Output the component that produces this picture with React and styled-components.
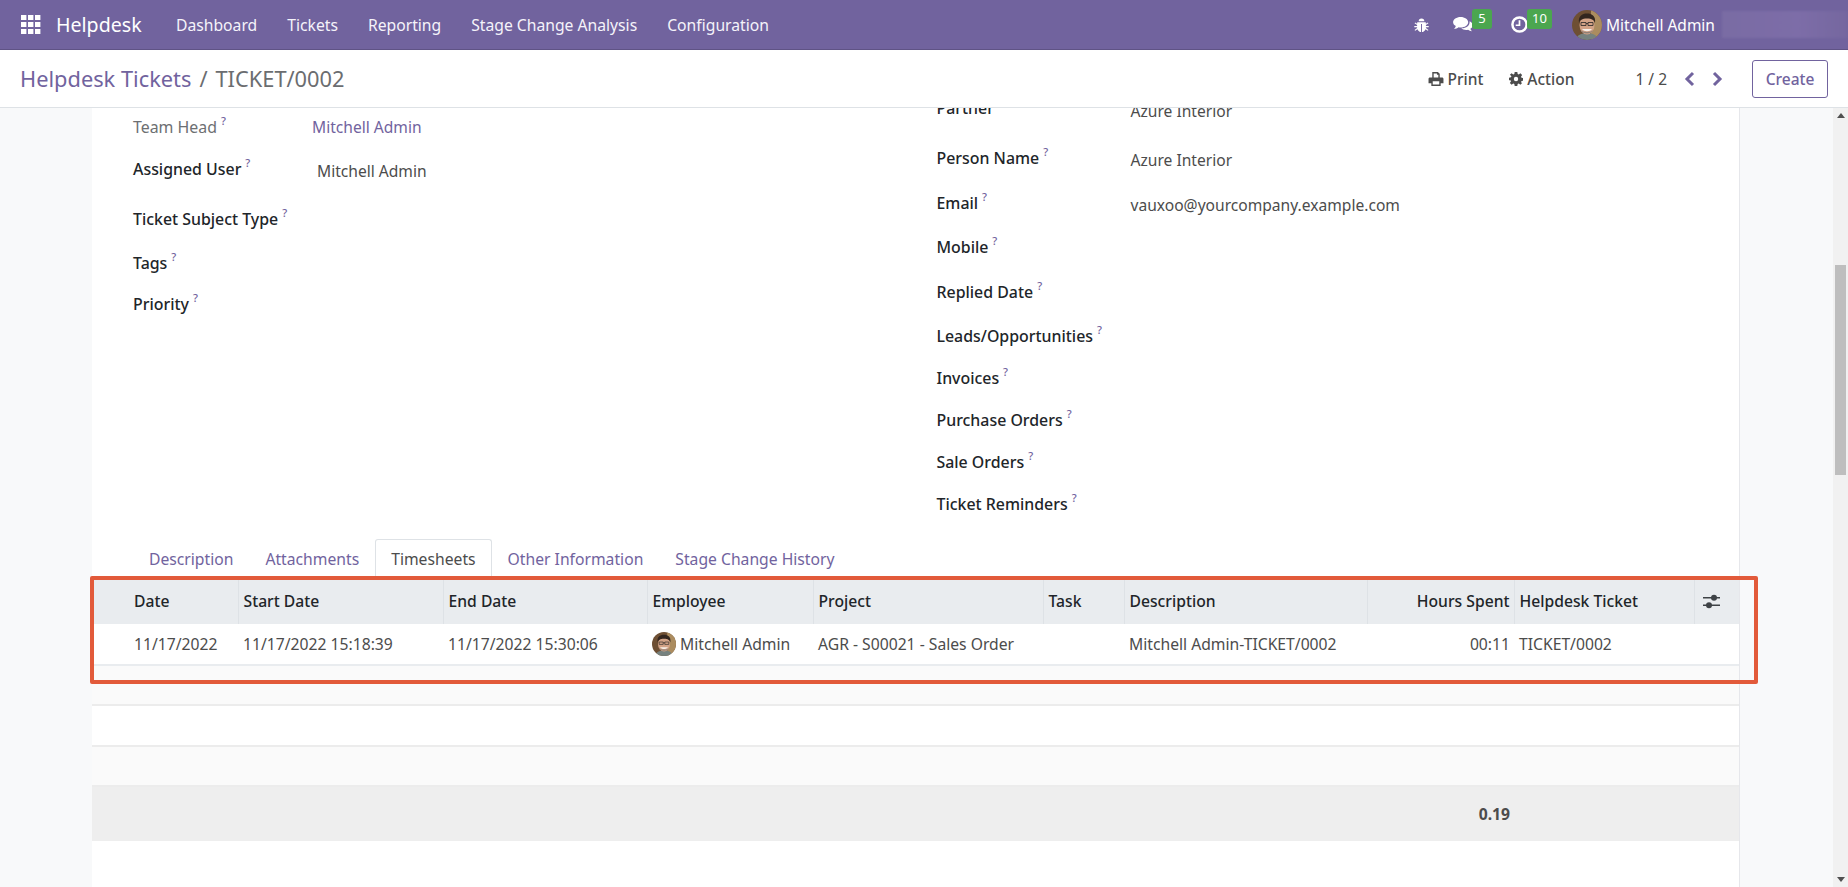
import React from "react";
import styled, { createGlobalStyle } from "styled-components";

const Global = createGlobalStyle`
  html, body { margin: 0; padding: 0; height: 100%; overflow: hidden; }
  body { font-family: "Noto Sans", "Liberation Sans", sans-serif; font-size: 15.7px; color: #4c4c4c; background: #fff; }
  * { box-sizing: border-box; }
`;

const Page = styled.div`display: flex; flex-direction: column; height: 887px; width: 1848px;`;
const Nav = styled.header`
  height: 50px; flex: none; display: flex; align-items: center; background: #71639e;
  border-bottom: 1px solid #5f5385; color: #fff;
`;
const Apps = styled.svg`width: 20px; height: 19px; margin-left: 21px; fill: #fff;`;
const Brand = styled.span`margin-left: 15px; font-size: 19.6px; margin-right: 15px; width: 90px;`;
const NavLink = styled.span`padding: 0 15px; font-size: 15.7px; color: #f5f3fa;`;
const NavRight = styled.div`margin-left: auto; display: flex; align-items: center; height: 100%;`;
const NavIcon = styled.span`position: relative; display: flex; align-items: center; height: 18px; margin-right: ${p => p.$mr}px;`;
const Badge = styled.span`
  position: absolute; left: ${p => p.$left}px; top: -7px; height: 20px; width: ${p => p.$w}px;
  background: #4ba64f; border-radius: 3px; color: #fff; font-size: 13px; line-height: 19px; text-align: center;
`;
const Avatar = styled.svg`width: ${p => p.$s}px; height: ${p => p.$s}px; border-radius: 50%; flex: none; display: block;`;
const UserName = styled.span`margin-left: 4px; font-size: 15.5px; width: 116px; white-space: nowrap;`;
const Blur = styled.div`width: 126px; height: 27px; background: linear-gradient(90deg,#7a6ca4,#7d6da8 60%,#75679f); filter: blur(1px);`;

const Control = styled.div`
  height: 58px; flex: none; display: flex; align-items: center; padding: 0 20px; background: #fff;
  border-bottom: 1px solid #dee2e6;
`;
const Crumbs = styled.div`font-size: 21.8px; color: #6b6d70; display: flex; gap: 8px;`;
const Crumb = styled.span`color: #71639e;`;
const Tools = styled.div`margin-left: auto; display: flex; align-items: center; color: #4c4c4c;`;
const Tool = styled.span`display: flex; align-items: center; gap: 4px; font-size: 15.5px; font-weight: 500; margin-right: ${p => p.$mr}px;`;
const Pager = styled.span`font-size: 15.5px; margin-right: 17px;`;
const Chev = styled.svg`width: 12px; height: 16px; fill: none; stroke: #71639e; stroke-width: 3; margin-right: ${p => p.$mr}px;`;
const Create = styled.button`
  width: 76px; height: 38px; margin-left: 29px; border: 1px solid #71639e; background: #fff; border-radius: 3px;
  color: #71639e; font: 500 15.5px "Noto Sans", sans-serif;
`;

const Body = styled.div`flex: 1; min-height: 0; display: flex; background: #f8f9fa;`;
const Scroller = styled.div`flex: 1; min-width: 0; padding: 0 93px 0 92px;`;
const Sheet = styled.main`height: 100%; background: #fff; border-right: 1px solid #e6e7eb; position: relative;`;
const Clip = styled.div`height: 100%; overflow: hidden;`;
const FormCols = styled.div`display: grid; grid-template-columns: 1fr 1fr; margin-top: -7px; height: 438px;`;
const Col = styled.div`display: flex; flex-direction: column; padding-left: ${p => p.$pl}px;`;
const Field = styled.div`display: flex; height: ${p => p.$h}px; margin-top: ${p => p.$mt || 0}px; align-items: flex-start;`;
const Label = styled.div`
  width: ${p => p.$w}px; flex: none; color: ${p => p.$muted ? "#6d6f72" : "#212529"}; font-weight: ${p => p.$muted ? 400 : 500};
  font-size: 15.9px; line-height: 22px; white-space: nowrap;
`;
const Help = styled.sup`color: #71639e; font-size: 11px; margin-left: 4px; font-weight: 500; position: relative; top: -2px; line-height: 0;`;
const Value = styled.div`
  font-size: 15.6px; line-height: 22px; color: ${p => p.$link ? "#71639e" : "#4c4c4c"};
  margin-left: ${p => p.$ml || 0}px; margin-top: ${p => p.$mt || 0}px;
`;

const Tabs = styled.div`display: flex; padding-left: 41px; height: 37px;`;
const Tab = styled.div`
  padding: 0 15px; height: 37px; line-height: 39px; font-size: 15.7px; color: ${p => p.$on ? "#4c4c4c" : "#71639e"};
  border: 1px solid ${p => p.$on ? "#dee2e6" : "transparent"}; border-bottom: 0; border-radius: 3px 3px 0 0;
`;
const Table = styled.table`border-collapse: collapse; table-layout: fixed; width: 1647px; font-size: 15.7px;`;
const Th = styled.th`
  height: 48px; padding: 2px ${p => p.$right ? 4 : 5}px 0 ${p => p.$pl || 5}px; text-align: ${p => p.$right ? "right" : "left"}; font-weight: 500; color: #212529;
  background: #e9ecef; border-right: 1px solid #dee2e6; white-space: nowrap;
  &:last-child { border-right: 0; }
`;
const Td = styled.td`
  height: 41px; padding: 0 ${p => p.$right ? 4 : 5}px 1px ${p => p.$pl || 5}px; text-align: ${p => p.$right ? "right" : "left"}; color: #4c4c4c; white-space: nowrap;
  border-bottom: 2px solid #e9ecef;
`;
const Emp = styled.span`display: flex; align-items: center; gap: 4px;`;
const Stripe = styled.tr`height: ${p => p.$h}px; background: ${p => p.$alt ? "#fafafa" : "#fff"}; border-bottom: 2px solid #ececec;`;
const Foot = styled.tr`height: 55px; background: #eeeeee; font-weight: 700;`;
const FootCell = styled.td`padding: 0 4px 0 5px; text-align: ${p => p.$right ? "right" : "left"}; color: #4c4c4c;`;
const Sliders = styled.svg`width: 17px; height: 17px; display: block; margin-left: 3px; fill: #3e4246;`;

const Highlight = styled.div`
  position: absolute; left: -2px; top: 468px; width: 1668px; height: 108px;
  border: 4px solid #e25a3a; border-radius: 2px; pointer-events: none;
`;

const Bar = styled.aside`width: 15px; flex: none; background: #f1f1f1; display: flex; flex-direction: column; align-items: center;`;
const Arrow = styled.div`
  width: 0; height: 0; margin: 5px 0; border-left: 4px solid transparent; border-right: 4px solid transparent;
  ${p => p.$up ? "border-bottom: 5px solid #505050;" : "border-top: 5px solid #505050;"}
`;
const Thumb = styled.div`width: 11px; height: 210px; background: #bebebe; margin-top: 142px; margin-bottom: auto;`;

const Face = ({ s }) => (
  <Avatar $s={s} viewBox="0 0 30 30">
    <rect width="30" height="30" fill="#6e4f33" />
    <rect x="19" width="11" height="30" fill="#ab8c5f" />
    <path d="M4 30c1-5 5-7 11-7s10 2 11 7z" fill="#76827f" />
    <ellipse cx="15" cy="15" rx="7.5" ry="9.500" fill="#d3a387" />
    <path d="M7 13C6 6 10 3.500 15 3.500S24 6 23 13c-1-3-3-4.500-8-4.500S8 10 7 13z" fill="#33261f" />
    <path d="M9 12.500h5v3H9zM16 12.500h5v3h-5zM14 13.500h2" fill="none" stroke="#3a3330" strokeWidth=".9" />
    <path d="M10 19c2 3 8 3 10 0z" fill="#f7efe8" />
    <path d="M8.500 20c1.500 4.500 11.500 4.500 13 0-2 2.600-11 2.600-13 0z" fill="#8f8178" />
  </Avatar>
);

const L = ({ children, ...p }) => <Label {...p}>{children}<Help>?</Help></Label>;

const widths = [146, 205, 204, 166, 230, 81, 243, 147, 180, 45];

export default function App() {
  return (
    <Page>
      <Global />
      <Nav>
        <Apps viewBox="0 0 20 19">
          {[0, 7, 14].flatMap(y => [0, 7, 14].map(x => <rect key={x + "-" + y} x={x} y={y} width="5.4" height="5" />))}
        </Apps>
        <Brand>Helpdesk</Brand>
        <NavLink>Dashboard</NavLink>
        <NavLink>Tickets</NavLink>
        <NavLink>Reporting</NavLink>
        <NavLink>Stage Change Analysis</NavLink>
        <NavLink>Configuration</NavLink>
        <NavRight>
          <NavIcon $mr={24}>
            <svg width="15" height="16" viewBox="0 0 16 16" fill="#fff"><path d="M5 4a3 3 0 0 1 6 0zM3.500 5h9l.2 1.600 2-1.400.7 1-2.700 1.900V9h3v1.300h-3v1l2.700 1.900-.7 1-2.400-1.700C11.500 14.500 10 15.500 8.500 15.500V7h-1v8.500c-1.500 0-3-1-3.800-3L1.300 14.200l-.7-1 2.700-1.900v-1h-3V9h3V8.100L.6 6.200l.7-1 2 1.400z" /></svg>
          </NavIcon>
          <NavIcon $mr={38}>
            <svg width="20" height="17" viewBox="0 0 21 18" fill="#fff"><path d="M8 1c4.400 0 8 2.500 8 5.600s-3.600 5.600-8 5.600c-.8 0-1.500-.1-2.200-.2C4.500 13 2.800 13.600 1 13.800c1-1 1.700-2 1.900-3.100C1.100 9.700 0 8.200 0 6.600 0 3.500 3.600 1 8 1z" /><path d="M17.500 5.500c2 .9 3.400 2.500 3.400 4.200 0 1.500-1 2.900-2.600 3.800.2.900.8 1.800 1.700 2.600-1.600-.2-3-.7-4.200-1.600-.6.100-1.200.2-1.900.2-2.100 0-4-.7-5.200-1.700 5 .1 9.300-2.700 8.800-7.500z" /></svg>
            <Badge $left={19} $w={20}>5</Badge>
          </NavIcon>
          <NavIcon $mr={44}>
            <svg width="17" height="17" viewBox="0 0 18 18" fill="none" stroke="#fff"><circle cx="9" cy="9" r="7.500" strokeWidth="2.600" /><path d="M9 4.500V9.800H5" strokeWidth="1.800" /></svg>
            <Badge $left={16} $w={25}>10</Badge>
          </NavIcon>
          <Face s={30} />
          <UserName>Mitchell Admin</UserName>
          <Blur />
        </NavRight>
      </Nav>
      <Control>
        <Crumbs><Crumb>Helpdesk Tickets</Crumb><span>/</span><span>TICKET/0002</span></Crumbs>
        <Tools>
          <Tool $mr={26}>
            <svg width="16" height="14" viewBox="0 0 16 15" fill="#4c4c4c"><path d="M4 0h6l2 2v4h-1.500V3H9V1.500H5.500V6H4zM1.500 6h13c.8 0 1.500.7 1.500 1.500V12h-3v3H3v-3H0V7.500C0 6.700.7 6 1.500 6zM4.500 10v3.500h7V10z" /></svg>
            Print
          </Tool>
          <Tool $mr={61}>
            <svg width="14" height="14" viewBox="0 0 16 16" fill="#4c4c4c"><path fillRule="evenodd" d="M6.500 0h3l.4 2.200 1.300.6L13 1.500l2 2-1.300 1.800.6 1.300 2.200.4v3l-2.200.4-.6 1.300L15 12.500l-2 2-1.800-1.300-1.300.6L9.500 16h-3l-.4-2.200-1.300-.6L3 14.500l-2-2 1.300-1.800-.6-1.300L0 9.500v-3l2.200-.4.6-1.300L1 3l2-1.500 1.800 1.300 1.300-.6zM8 5.500a2.500 2.500 0 1 0 0 5 2.500 2.500 0 0 0 0-5z" /></svg>
            Action
          </Tool>
          <Pager>1 / 2</Pager>
          <Chev $mr={15} viewBox="0 0 12 16"><path d="M9 2 3 8l6 6" /></Chev>
          <Chev viewBox="0 0 12 16"><path d="m3 2 6 6-6 6" /></Chev>
          <Create>Create</Create>
        </Tools>
      </Control>
      <Body>
        <Scroller>
          <Sheet>
            <Clip>
              <FormCols>
                <Col $pl={41}>
                  <Field $h={42} $mt={15}><L $w={179} $muted>Team Head</L><Value $link>Mitchell Admin</Value></Field>
                  <Field $h={50}><L $w={179}>Assigned User</L><Value $ml={5} $mt={2}>Mitchell Admin</Value></Field>
                  <Field $h={44}><L $w={179}>Ticket Subject Type</L></Field>
                  <Field $h={41}><L $w={179}>Tags</L></Field>
                  <Field $h={42}><L $w={179}>Priority</L></Field>
                </Col>
                <Col $pl={21}>
                  <Field $h={50} $mt={-4}><Label $w={194}>Partner</Label><Value $mt={3}>Azure Interior</Value></Field>
                  <Field $h={45}><L $w={194}>Person Name</L><Value $mt={2}>Azure Interior</Value></Field>
                  <Field $h={44}><L $w={194}>Email</L><Value $mt={2}>vauxoo@yourcompany.example.com</Value></Field>
                  <Field $h={45}><L $w={194}>Mobile</L></Field>
                  <Field $h={44}><L $w={194}>Replied Date</L></Field>
                  <Field $h={42}><L $w={194}>Leads/Opportunities</L></Field>
                  <Field $h={42}><L $w={194}>Invoices</L></Field>
                  <Field $h={42}><L $w={194}>Purchase Orders</L></Field>
                  <Field $h={42}><L $w={194}>Sale Orders</L></Field>
                  <Field $h={30}><L $w={194}>Ticket Reminders</L></Field>
                </Col>
              </FormCols>
              <Tabs>
                <Tab>Description</Tab>
                <Tab>Attachments</Tab>
                <Tab $on>Timesheets</Tab>
                <Tab>Other Information</Tab>
                <Tab>Stage Change History</Tab>
              </Tabs>
              <Table>
                <colgroup>{widths.map((w, i) => <col key={i} width={w} />)}</colgroup>
                <thead>
                  <tr>
                    <Th $pl={42}>Date</Th><Th>Start Date</Th><Th>End Date</Th><Th>Employee</Th><Th>Project</Th><Th>Task</Th>
                    <Th>Description</Th><Th $right>Hours Spent</Th><Th>Helpdesk Ticket</Th>
                    <Th>
                      <Sliders viewBox="0 0 17 17">
                        <path d="M0 4h17v1.400H0zM0 11.600h17V13H0z" />
                        <circle cx="11" cy="4.700" r="3" />
                        <circle cx="6" cy="12.300" r="3" />
                      </Sliders>
                    </Th>
                  </tr>
                </thead>
                <tbody>
                  <tr>
                    <Td $pl={42}>11/17/2022</Td><Td>11/17/2022 15:18:39</Td><Td>11/17/2022 15:30:06</Td>
                    <Td><Emp><Face s={24} />Mitchell Admin</Emp></Td>
                    <Td>AGR - S00021 - Sales Order</Td><Td />
                    <Td>Mitchell Admin-TICKET/0002</Td><Td $right>00:11</Td><Td>TICKET/0002</Td><Td />
                  </tr>
                  <Stripe $h={40} $alt><td colSpan={10} /></Stripe>
                  <Stripe $h={41}><td colSpan={10} /></Stripe>
                  <Stripe $h={40} $alt><td colSpan={10} /></Stripe>
                  <Foot><FootCell colSpan={7} /><FootCell $right>0.19</FootCell><FootCell colSpan={2} /></Foot>
                </tbody>
              </Table>
            </Clip>
            <Highlight />
          </Sheet>
        </Scroller>
        <Bar>
          <Arrow $up />
          <Thumb />
          <Arrow />
        </Bar>
      </Body>
    </Page>
  );
}
